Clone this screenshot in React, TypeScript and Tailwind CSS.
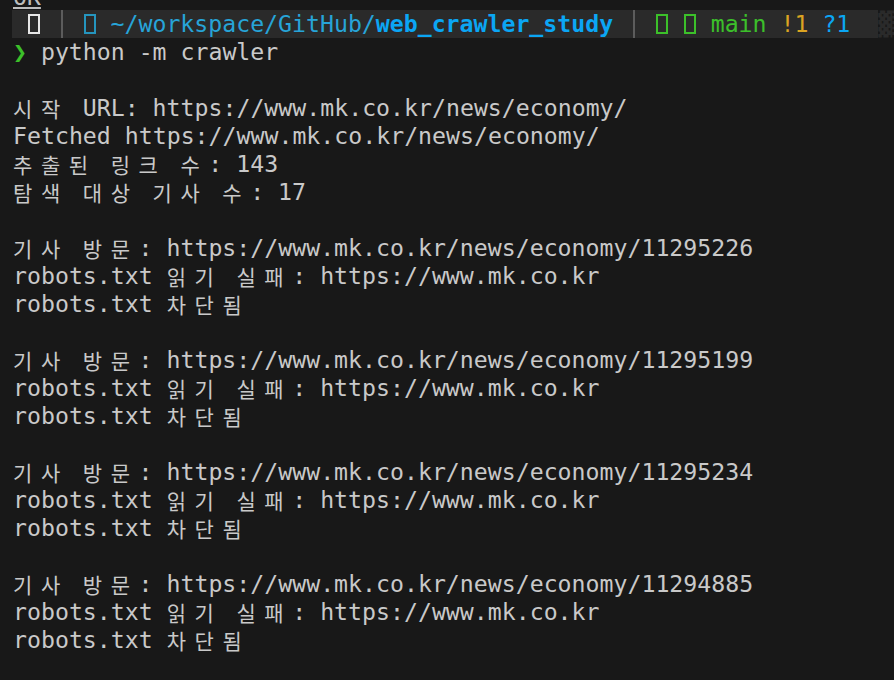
import React from "react"

const CELL = "w-[13.95px]"

const blocks = ["11295226", "11295199", "11295234", "11294885"]

const isWide = (ch: string) => {
    const c = ch.charCodeAt(0)
    return c >= 0xac00 && c <= 0xd7a3
}

// renders a line on the terminal grid: hangul takes two cells
const Line = ({ text = "", className = "" }: { text?: string; className?: string }) => (
    <div className={"h-[28px] leading-[28px] whitespace-pre " + className}>
        {text === "" ? "\u00a0" : Array.from(text).map((ch, i) =>
            isWide(ch) ? (
                <span
                    key={i}
                    className="inline-block w-[27.9px] text-left align-top text-[21px] font-['Noto_Sans_CJK_KR',sans-serif]"
                >
                    {ch}
                </span>
            ) : (
                <React.Fragment key={i}>{ch}</React.Fragment>
            )
        )}
    </div>
)

const Tofu = ({ color }: { color: string }) => (
    <span className={"inline-flex h-[28px] items-center justify-center align-top " + CELL}>
        <span className={"block h-[20px] w-[12px] border-2 " + color}></span>
    </span>
)

const Sep = () => (
    <span className={"inline-flex h-[28px] items-center justify-center align-top " + CELL}>
        <span className="block h-[28px] w-[2px] bg-[#5c5c5c]"></span>
    </span>
)

const Space = () => <span className={"inline-block h-[28px] align-top " + CELL}></span>

const App: React.FC = () => {
    return (
        <div className="h-[680px] w-[894px] overflow-hidden bg-[#181818] pl-[13px] font-['DejaVu_Sans_Mono',monospace] text-[23.2px] text-[#c9c9c9]">
            {/* previous output, scrolled off the top */}
            <div className="h-[10px] overflow-hidden">
                <div className="mt-[-13px] h-[20px] leading-[20px] text-[#bdbdbd] underline decoration-2 underline-offset-[2px]">OK</div>
            </div>

            {/* prompt bar */}
            <div className="flex h-[28px] leading-[28px] whitespace-pre">
                <div className="ml-[-1px] flex h-[28px] bg-[#2a2a2a] pl-[1px]">
                    <Space />
                    <Tofu color="border-[#e6e6e6]" />
                    <Space />
                    <Sep />
                    <Space />
                    <Tofu color="border-[#2595be]" />
                    <Space />
                    <span className="text-[#27a4d8]">~/workspace/GitHub/</span>
                    <span className="font-bold text-[#0ba6f4]">web_crawler_study</span>
                    <Space />
                    <Sep />
                    <Space />
                    <Tofu color="border-[#3cc02a]" />
                    <Space />
                    <Tofu color="border-[#3cc02a]" />
                    <Space />
                    <span className="text-[#3cc02a]">main</span>
                    <span> </span>
                    <span className="text-[#dba422]">!1</span>
                    <span> </span>
                    <span className="text-[#0ba6f4]">?1</span>
                    <Space />
                    <Space />
                </div>
                <span className="text-[#2a2a2a]">▓▒</span>
            </div>

            <div className="h-[28px] leading-[28px] whitespace-pre">
                <span className="font-bold text-[#3cc02a]">❯</span> python -m crawler
            </div>
            <Line />
            <Line text="시작 URL: https://www.mk.co.kr/news/economy/" />
            <Line text="Fetched https://www.mk.co.kr/news/economy/" />
            <Line text="추출된 링크 수: 143" />
            <Line text="탐색 대상 기사 수: 17" />
            {blocks.map((id) => (
                <React.Fragment key={id}>
                    <Line />
                    <Line text={"기사 방문: https://www.mk.co.kr/news/economy/" + id} />
                    <Line text="robots.txt 읽기 실패: https://www.mk.co.kr" />
                    <Line text="robots.txt 차단됨" />
                </React.Fragment>
            ))}
        </div>
    )
}

export default App
